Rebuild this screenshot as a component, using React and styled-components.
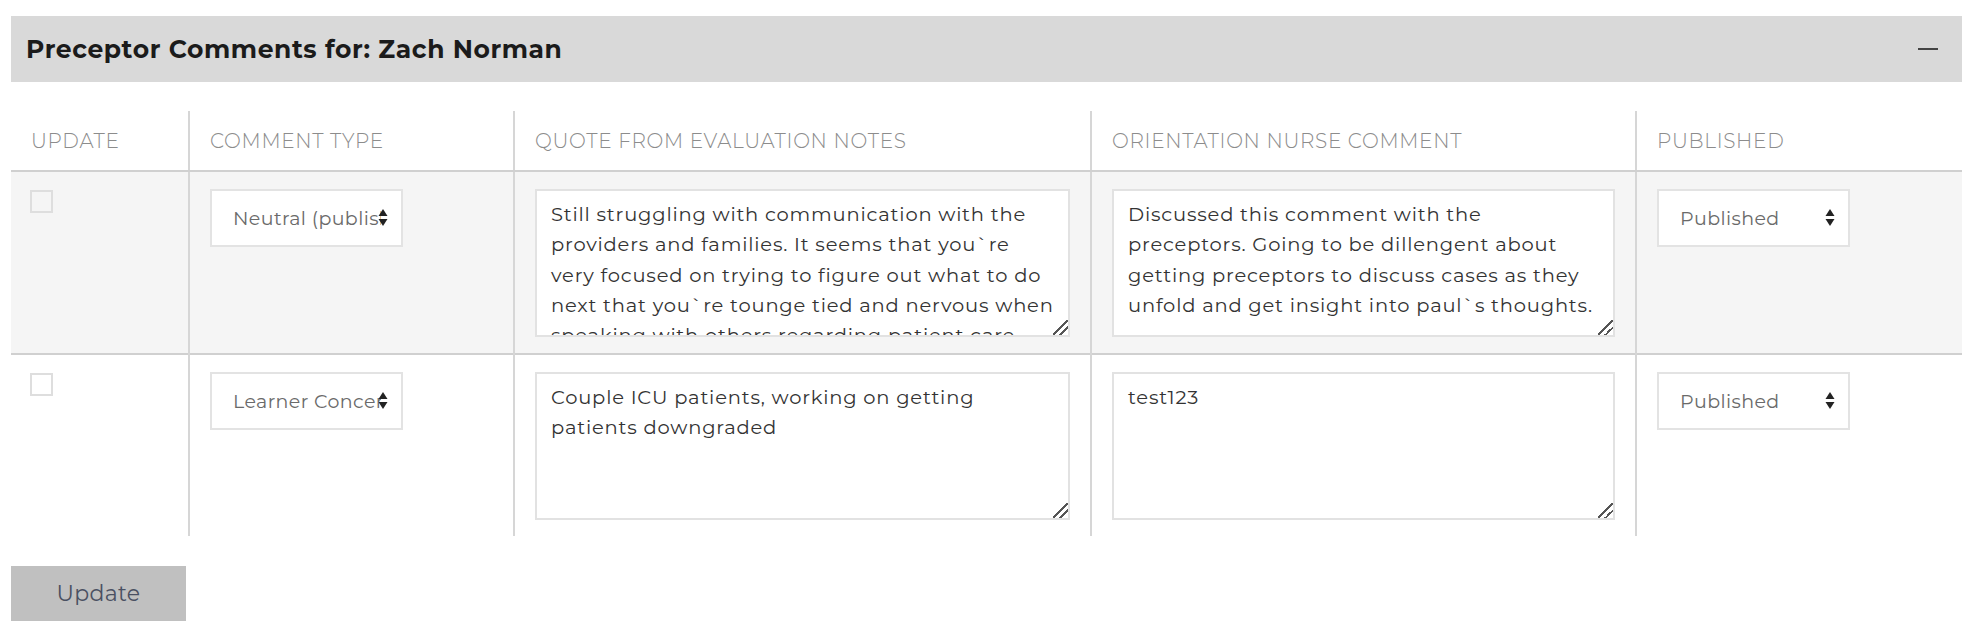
import React from 'react';
import styled, { createGlobalStyle } from 'styled-components';

const GlobalStyle = createGlobalStyle`
  body {
    margin: 0;
    background: #ffffff;
    font-family: Montserrat, "Open Sans", "Liberation Sans", sans-serif;
  }
`;

const Page = styled.div`
  padding: 16px 10px 0 11px;
`;

const PanelHeader = styled.div`
  background-color: #d9d9d9;
  height: 66px;
  display: flex;
  align-items: center;
  justify-content: space-between;
  padding: 0 24px 0 15px;
`;

const Title = styled.h2`
  margin: 0;
  font-size: 25px;
  font-weight: 700;
  color: #1b1b1b;
  letter-spacing: 0.6px;
`;

const Collapse = styled.span`
  display: block;
  width: 20px;
  height: 2px;
  background: #444;
`;

const Table = styled.table`
  width: 100%;
  margin-top: 29px;
  border-collapse: collapse;
  table-layout: fixed;
`;

const Th = styled.th`
  text-align: left;
  font-weight: 300;
  font-size: 20px;
  letter-spacing: 0.7px;
  color: #8c8c8c;
  text-transform: uppercase;
  padding: 0 20px;
  height: 59px;
  border-bottom: 2px solid #d0d0d0;
  border-left: ${p => (p.first ? 'none' : '2px solid #d6d6d6')};
`;

const Row = styled.tr`
  background: ${p => (p.shaded ? '#f5f5f5' : '#ffffff')};
  border-bottom: ${p => (p.last ? 'none' : '2px solid #d0d0d0')};
`;

const Td = styled.td`
  vertical-align: top;
  padding: 17px 20px 16px;
  border-left: ${p => (p.first ? 'none' : '2px solid #d6d6d6')};
`;

const Check = styled.input.attrs({ type: 'checkbox' })`
  appearance: none;
  margin: 1px 0 0 -1px;
  width: 23px;
  height: 23px;
  border: 2px solid #dedede;
  background: transparent;
  display: block;
`;

const SelectWrap = styled.div`
  position: relative;
  width: 193px;
`;

const Select = styled.select`
  appearance: none;
  width: 193px;
  height: 58px;
  border: 2px solid #e3e3e3;
  background: #ffffff;
  border-radius: 0;
  padding: 0 20px 0 21px;
  font-family: inherit;
  font-size: 19px;
  letter-spacing: 0.4px;
  color: #6a6a6a;
  outline: none;
`;

const Arrows = styled.svg`
  position: absolute;
  right: 15px;
  top: 20px;
  pointer-events: none;
`;

const TextArea = styled.textarea`
  display: block;
  box-sizing: border-box;
  width: 100%;
  height: 148px;
  border: 2px solid #e2e2e2;
  background: #ffffff;
  padding: 8px 14px;
  font-family: inherit;
  font-size: 19.5px;
  letter-spacing: 0.8px;
  line-height: 30.3px;
  color: #333333;
  overflow: hidden;
  resize: vertical;
  border-radius: 0;
  outline: none;

  &::-webkit-resizer {
    background: linear-gradient(
      135deg,
      transparent 46%,
      #555 46%,
      #555 54%,
      transparent 54%,
      transparent 70%,
      #555 70%,
      #555 78%,
      transparent 78%
    );
  }
`;

const UpdateButton = styled.button`
  margin-top: 30px;
  width: 175px;
  height: 55px;
  border: none;
  background: #c0c0c0;
  color: #4a5062;
  font-family: inherit;
  font-size: 22px;
  letter-spacing: 0.3px;
  cursor: pointer;
`;

const rows = [
  {
    type: 'Neutral (published)',
    quote:
      'Still struggling with communication with the providers and families. It seems that you`re very focused on trying to figure out what to do next that you`re tounge tied and nervous when speaking with others regarding patient care.',
    comment:
      'Discussed this comment with the preceptors. Going to be dillengent about getting preceptors to discuss cases as they unfold and get insight into paul`s thoughts.',
  },
  {
    type: 'Learner Concern',
    quote: 'Couple ICU patients, working on getting patients downgraded',
    comment: 'test123',
  },
];

const Dropdown = ({ value, options }) => (
  <SelectWrap>
    <Select defaultValue={value}>
      {options.map(o => (
        <option key={o}>{o}</option>
      ))}
    </Select>
    <Arrows width="10" height="17" viewBox="0 0 10 17">
      <path d="M5 0 L9.5 7 L0.5 7 Z" fill="#222" />
      <path d="M5 17 L9.5 10 L0.5 10 Z" fill="#222" />
    </Arrows>
  </SelectWrap>
);

const App = () => (
  <Page>
    <GlobalStyle />
    <PanelHeader>
      <Title>Preceptor Comments for: Zach Norman</Title>
      <Collapse />
    </PanelHeader>
    <Table>
      <colgroup>
        <col style={{ width: 178 }} />
        <col style={{ width: 325 }} />
        <col style={{ width: 577 }} />
        <col style={{ width: 545 }} />
        <col />
      </colgroup>
      <thead>
        <tr>
          <Th first>Update</Th>
          <Th>Comment Type</Th>
          <Th>Quote from Evaluation Notes</Th>
          <Th>Orientation Nurse Comment</Th>
          <Th>Published</Th>
        </tr>
      </thead>
      <tbody>
        {rows.map((r, i) => (
          <Row key={i} shaded={i === 0} last={i === rows.length - 1}>
            <Td first>
              <Check />
            </Td>
            <Td>
              <Dropdown
                value={r.type}
                options={['Neutral (published)', 'Learner Concern', 'Positive']}
              />
            </Td>
            <Td>
              <TextArea defaultValue={r.quote} />
            </Td>
            <Td>
              <TextArea defaultValue={r.comment} />
            </Td>
            <Td>
              <Dropdown value="Published" options={['Published', 'Unpublished']} />
            </Td>
          </Row>
        ))}
      </tbody>
    </Table>
    <UpdateButton>Update</UpdateButton>
  </Page>
);

export default App;
